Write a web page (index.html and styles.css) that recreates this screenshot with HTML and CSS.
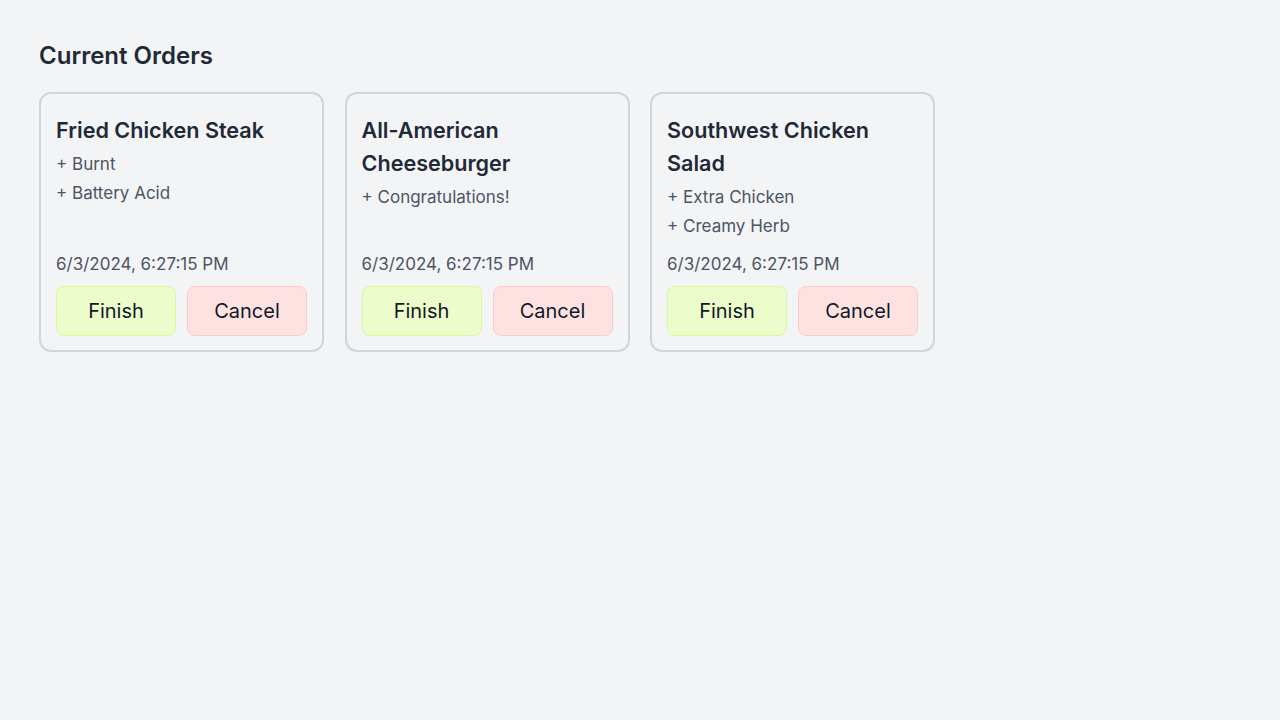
FILE: index.html
```html
<!DOCTYPE html>
<html lang="en">
<head>
<meta charset="utf-8">
<title>Current Orders</title>
<link rel="stylesheet" href="styles.css">
</head>
<body>
<main class="page">
  <h1 class="heading">Current Orders</h1>
  <div class="orders">
    <div class="card">
      <h2 class="title">Fried Chicken Steak</h2>
      <ul class="mods">
        <li>+ Burnt</li>
        <li>+ Battery Acid</li>
      </ul>
      <div class="date">6/3/2024, 6:27:15 PM</div>
      <div class="actions">
        <button class="btn finish">Finish</button>
        <button class="btn cancel">Cancel</button>
      </div>
    </div>
    <div class="card">
      <h2 class="title">All-American Cheeseburger</h2>
      <ul class="mods">
        <li>+ Congratulations!</li>
      </ul>
      <div class="date">6/3/2024, 6:27:15 PM</div>
      <div class="actions">
        <button class="btn finish">Finish</button>
        <button class="btn cancel">Cancel</button>
      </div>
    </div>
    <div class="card">
      <h2 class="title">Southwest Chicken Salad</h2>
      <ul class="mods">
        <li>+ Extra Chicken</li>
        <li>+ Creamy Herb</li>
      </ul>
      <div class="date">6/3/2024, 6:27:15 PM</div>
      <div class="actions">
        <button class="btn finish">Finish</button>
        <button class="btn cancel">Cancel</button>
      </div>
    </div>
  </div>
</main>
</body>
</html>
```
FILE: styles.css
```css
* { box-sizing: border-box; }
html, body {
  margin: 0;
  padding: 0;
  background: #f3f4f6;
  font-family: "Inter", "Noto Sans", sans-serif;
  color: #1f2937;
}
.page {
  padding: 40px 39px;
}
.heading {
  margin: 0 0 20px 0;
  font-size: 24px;
  line-height: 32px;
  font-weight: 600;
  color: #1f2937;
}
.orders {
  display: flex;
  gap: 20.5px;
  align-items: stretch;
}
.card {
  width: 285px;
  border: 2px solid #d1d5db;
  border-radius: 12px;
  padding: 20px 15px 14px 15px;
  display: flex;
  flex-direction: column;
}
.title {
  margin: 0;
  font-size: 21.6px;
  line-height: 33px;
  font-weight: 600;
  color: #1f2937;
}
.mods {
  list-style: none;
  margin: 3px 0 0 0;
  padding: 0;
  font-size: 17px;
  line-height: 29px;
  color: #4b5563;
}
.date {
  margin-top: auto;
  padding-top: 9px;
  font-size: 17px;
  line-height: 29px;
  color: #4b5563;
}
.actions {
  display: flex;
  gap: 11px;
  margin-top: 7px;
}
.btn {
  flex: 1;
  height: 50px;
  border-radius: 8px;
  font-family: inherit;
  font-size: 20px;
  color: #111827;
  cursor: pointer;
}
.finish {
  background: #ecfccb;
  border: 1px solid #d9f99d;
}
.cancel {
  background: #fee2e2;
  border: 1px solid #fecaca;
}
```
